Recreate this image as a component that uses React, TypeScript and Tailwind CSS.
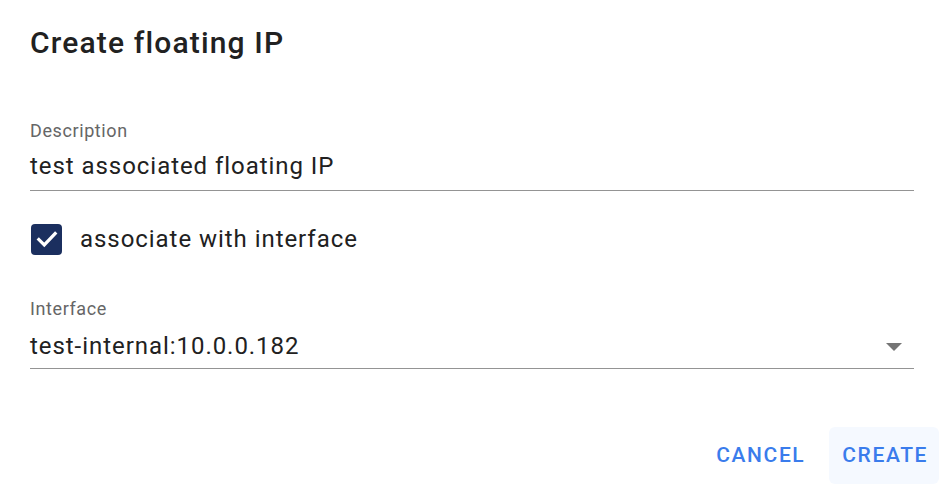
export default function App() {
  return (
    <div
      className="w-[948px] h-[494px] bg-white flex flex-col text-[#212121]"
      style={{ fontFamily: 'Roboto, "Liberation Sans", sans-serif' }}
    >
      <div className="pl-[30px] pr-[34px] flex flex-col">
        <h2 className="mt-[25px] text-[30px] leading-[36px] font-medium tracking-[1.15px]">Create floating IP</h2>

        <div className="mt-[58px] flex flex-col">
          <label className="text-[18px] leading-[24px] tracking-[0.6px] text-[#666666]">Description</label>
          <div className="mt-[7px] pb-[8px] border-b border-[#949494] text-[24px] leading-[32px] tracking-[0.95px]">
            test associated floating IP
          </div>
        </div>

        <div className="mt-[32px] flex items-center h-[32px]">
          <span className="ml-[1px] w-[31px] h-[31px] rounded-[4px] bg-[#1b2f5f] flex items-center justify-center">
            <svg width="26" height="26" viewBox="0 0 24 24" fill="none">
              <path d="M4.5 12.5l5 5L19.5 7" stroke="white" strokeWidth="3" strokeLinecap="square" />
            </svg>
          </span>
          <span className="ml-[18px] text-[24px] leading-[32px] tracking-[0.95px]">associate with interface</span>
        </div>

        <div className="mt-[42px] flex flex-col">
          <label className="text-[18px] leading-[24px] tracking-[0.6px] text-[#666666]">Interface</label>
          <div className="mt-[9px] pb-[6px] border-b border-[#949494] flex items-center justify-between">
            <span className="text-[24px] leading-[32px] tracking-[0.95px]">test-internal:10.0.0.182</span>
            <svg width="16" height="8" viewBox="0 0 16 8" className="mr-[12px] mt-[2px]">
              <path d="M0 0h16L8 8z" fill="#757575" />
            </svg>
          </div>
        </div>
      </div>

      <div className="mt-auto mb-[10px] mr-[9px] flex justify-end gap-[13px]">
        <button className="h-[57px] pl-[13px] pr-[11px] rounded-[6px] text-[21px] font-medium tracking-[1.6px] text-[#3a7cec]">
          CANCEL
        </button>
        <button className="h-[57px] pl-[13px] pr-[11px] rounded-[6px] bg-[#f5f9ff] text-[21px] font-medium tracking-[1.6px] text-[#3a7cec]">
          CREATE
        </button>
      </div>
    </div>
  );
}
